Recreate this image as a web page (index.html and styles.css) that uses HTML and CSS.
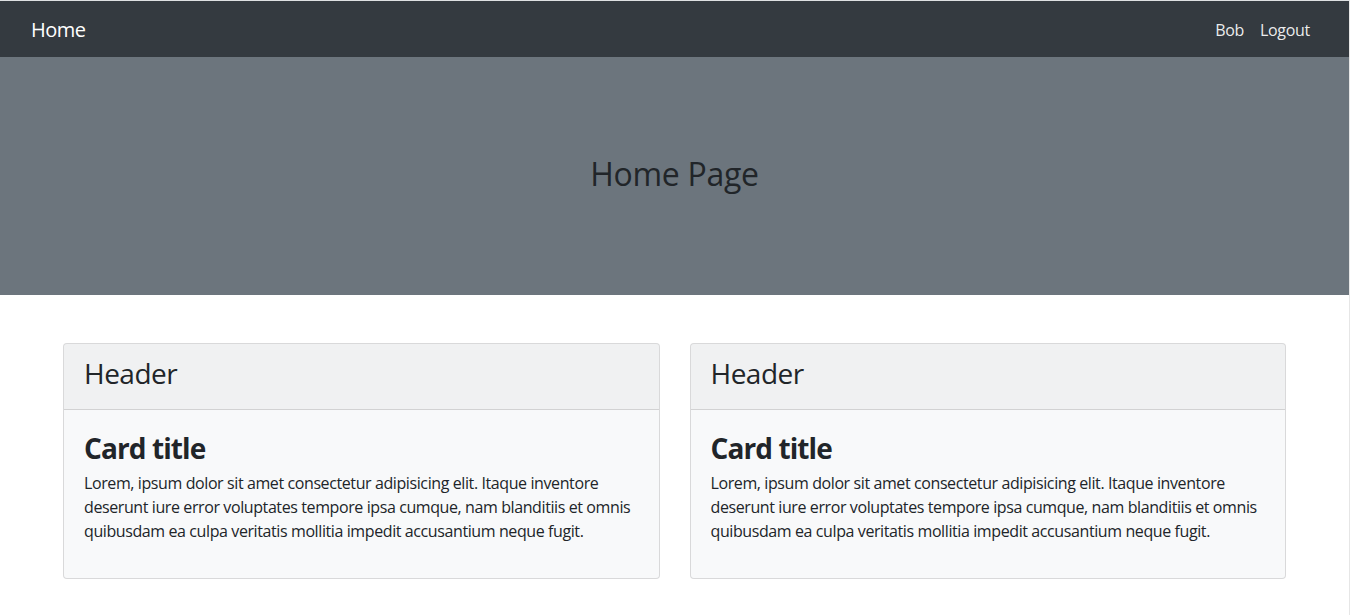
FILE: index.html
```html
<!DOCTYPE html>
<html lang="en">
<head>
<meta charset="utf-8">
<title>Home</title>
<link rel="stylesheet" href="styles.css">
</head>
<body>
<div class="page">
  <nav class="navbar">
    <a class="brand" href="#">Home</a>
    <ul class="nav">
      <li><a class="nav-link" href="#">Bob</a></li>
      <li><a class="nav-link" href="#">Logout</a></li>
    </ul>
  </nav>
  <header class="hero">
    <h2 class="hero-title">Home Page</h2>
  </header>
  <main class="cards">
    <div class="card">
      <div class="card-header"><h3 class="header-title">Header</h3></div>
      <div class="card-body">
        <h3 class="card-title">Card title</h3>
        <p class="card-text">Lorem, ipsum dolor sit amet consectetur adipisicing elit. Itaque inventore deserunt iure error voluptates tempore ipsa cumque, nam blanditiis et omnis quibusdam ea culpa veritatis mollitia impedit accusantium neque fugit.</p>
      </div>
    </div>
    <div class="card">
      <div class="card-header"><h3 class="header-title">Header</h3></div>
      <div class="card-body">
        <h3 class="card-title">Card title</h3>
        <p class="card-text">Lorem, ipsum dolor sit amet consectetur adipisicing elit. Itaque inventore deserunt iure error voluptates tempore ipsa cumque, nam blanditiis et omnis quibusdam ea culpa veritatis mollitia impedit accusantium neque fugit.</p>
      </div>
    </div>
  </main>
</div>
</body>
</html>
```

FILE: styles.css
```css
* { box-sizing: border-box; }
html, body { margin: 0; padding: 0; background: #fff; }
body {
  font-family: "Open Sans", "Noto Sans", "Liberation Sans", sans-serif;
  font-size: 16px;
  line-height: 1.5;
  color: #212529;
}
.page {
  border-top: 1px solid #dee0e2;
  border-right: 1px solid #e6e6e6;
  min-height: 615px;
}
.navbar {
  background: #343a40;
  height: 56px;
  padding: 2px 31px 0;
  display: flex;
  align-items: center;
  justify-content: space-between;
}
.brand {
  color: #fff;
  text-decoration: none;
  font-size: 20px;
  line-height: 30px;
  letter-spacing: -0.5px;
}
.nav {
  list-style: none;
  margin: 0;
  padding: 0;
  display: flex;
}
.nav-link {
  display: block;
  padding: 8px;
  color: rgba(255,255,255,0.92);
  text-decoration: none;
  font-size: 16px;
  letter-spacing: -0.3px;
}
.hero {
  background: #6c757d;
  height: 238px;
  display: flex;
  align-items: center;
  justify-content: center;
  padding-bottom: 3px;
}
.hero-title {
  margin: 0;
  font-size: 32px;
  font-weight: 400;
  line-height: 1.2;
  color: #212529;
  letter-spacing: -0.3px;
}
.cards {
  display: grid;
  grid-template-columns: 1fr 1fr;
  gap: 30px;
  padding: 48px 63px 0;
}
.card {
  background: #f8f9fa;
  border: 1px solid rgba(0,0,0,0.125);
  border-radius: 4px;
  overflow: hidden;
}
.card-header {
  background: rgba(0,0,0,0.03);
  border-bottom: 1px solid rgba(0,0,0,0.125);
  padding: 13px 20px 10px;
}
.header-title {
  margin: 0 0 8px;
  font-size: 28px;
  font-weight: 400;
  line-height: 1.2;
  letter-spacing: -0.5px;
}
.card-body {
  padding: 22px 20px 19px;
}
.card-title {
  margin: 0 0 6px;
  font-size: 28px;
  font-weight: 700;
  line-height: 1.2;
  letter-spacing: -0.9px;
}
.card-text {
  margin: 0 0 16px;
  letter-spacing: -0.4px;
}
```
